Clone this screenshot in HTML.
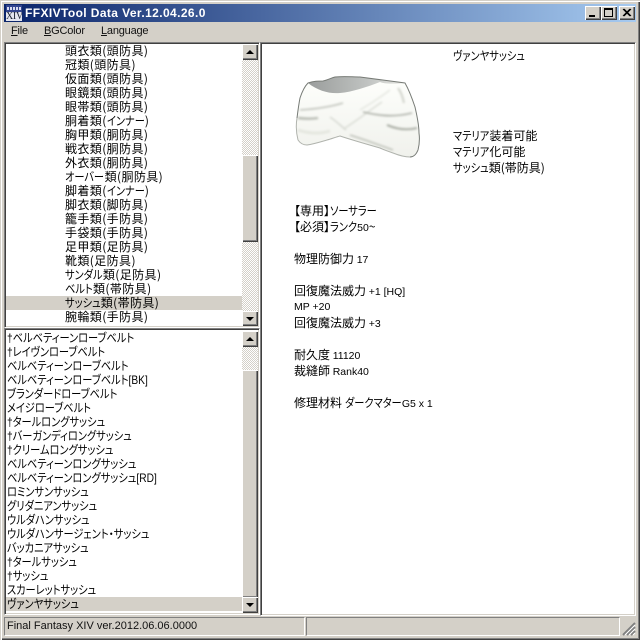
<!DOCTYPE html>
<html><head><meta charset="utf-8"><style>
html,body{margin:0;padding:0;width:640px;height:640px;overflow:hidden;background:#d4d0c8}
*{box-sizing:border-box}
body{position:relative;font:12px/14px "Noto Sans CJK JP","IPAGothic",sans-serif;color:#000;font-feature-settings:"palt"}
.a{position:absolute}
.t{position:absolute;white-space:nowrap;height:14px;line-height:14px}
.l{font-family:"Liberation Sans",sans-serif;font-size:10.5px;letter-spacing:0}
.k{display:inline-block;transform:scaleX(.85);transform-origin:0 0;letter-spacing:0}
.k3{margin-right:-4.7px}.k4{margin-right:-6.3px}.k5{margin-right:-7.9px}.k6{margin-right:-9.5px}
.w{transform:scaleX(.85);transform-origin:0 0}
.d{font-family:"Liberation Sans",sans-serif;font-size:12px}
.btn{position:absolute;background:#d4d0c8;box-shadow:inset 1px 1px 0 #fff,inset -1px -1px 0 #404040,inset -2px -2px 0 #808080}
.track{position:absolute;background:repeating-conic-gradient(#d4d0c8 0 25%,#fff 0 50%) 0 0/2px 2px}
.up{position:absolute;left:4px;top:6px;width:0;height:0;border-left:4px solid transparent;border-right:4px solid transparent;border-bottom:4px solid #000}
.dn{position:absolute;left:4px;top:6px;width:0;height:0;border-left:4px solid transparent;border-right:4px solid transparent;border-top:4px solid #000}
.sel{position:absolute;background:#d4d0c8}
.list1 .t{left:65px;letter-spacing:.4px}
.list2 .t{left:7px;transform:scaleX(.85);transform-origin:0 0}
.list2 .l{font-size:12px}
.menu{font:11px/14px 'Liberation Sans',sans-serif;color:#111;font-feature-settings:normal;letter-spacing:-.2px}
.r{left:294px}
</style></head><body>
<div class="a" style="left:0;top:0;width:640px;height:640px;box-shadow:inset 1px 1px 0 #d4d0c8,inset 2px 2px 0 #fff,inset -1px -1px 0 #404040,inset -2px -2px 0 #808080"></div>
<div class="a" style="left:4px;top:4px;width:632px;height:18px;background:linear-gradient(90deg,#0a246a,#a6caf0)"></div>
<div class="a" style="left:6px;top:5px;width:16px;height:16px;background:#e4e6f0;overflow:hidden">
<div class="a" style="left:0;top:0;width:16px;height:7px;background:#34468f"></div>
<div class="a" style="left:1px;top:2px;width:14px;height:3px;background:repeating-linear-gradient(90deg,#d8dcf0 0 2px,#34468f 2px 3px)"></div>
<div class="a" style="left:0;top:6px;width:16px;height:10px;font:10px/11px 'Liberation Serif',serif;color:#1a2030;text-align:center;letter-spacing:-.3px">XIV</div></div>
<div class="t" style="left:25px;top:6px;color:#fff;font:bold 12px/14px 'Liberation Sans',sans-serif;letter-spacing:.4px;font-feature-settings:normal">FFXIVTool Data Ver.12.04.26.0</div>
<div class="btn" style="left:585px;top:6px;width:16px;height:14px"><div class="a" style="left:4px;top:9px;width:6px;height:2px;background:#000"></div></div>
<div class="btn" style="left:601px;top:6px;width:16px;height:14px"><div class="a" style="left:3px;top:2px;width:9px;height:9px;border:1px solid #000;border-top-width:2px"></div></div>
<div class="btn" style="left:619px;top:6px;width:16px;height:14px"><svg class="a" style="left:3px;top:2px" width="10" height="9"><path d="M1 1L8 8M2 1L9 8M8 1L1 8M9 1L2 8" stroke="#000" stroke-width="1" fill="none"/></svg></div>
<div class="t menu" style="left:11px;top:24px"><u>F</u>ile</div>
<div class="t menu" style="left:44px;top:24px"><u>B</u>GColor</div>
<div class="t menu" style="left:101px;top:24px"><u>L</u>anguage</div>

<div class="a list1" style="left:4px;top:42px;width:256px;height:286px;background:#fff;overflow:hidden">
<div class="sel" style="left:2px;top:254px;width:236px;height:14px"></div>
<div style="position:absolute;left:-4px;top:-42px;width:260px;height:328px">
<div class="t" style="top:44px">頭衣類(頭防具)</div><div class="t" style="top:58px">冠類(頭防具)</div><div class="t" style="top:72px">仮面類(頭防具)</div><div class="t" style="top:86px">眼鏡類(頭防具)</div><div class="t" style="top:100px">眼帯類(頭防具)</div><div class="t" style="top:114px">胴着類(<span class="k k4">インナー</span>)</div><div class="t" style="top:128px">胸甲類(胴防具)</div><div class="t" style="top:142px">戦衣類(胴防具)</div><div class="t" style="top:156px">外衣類(胴防具)</div><div class="t" style="top:170px"><span class="k k4">オーバー</span>類(胴防具)</div><div class="t" style="top:184px">脚着類(<span class="k k4">インナー</span>)</div><div class="t" style="top:198px">脚衣類(脚防具)</div><div class="t" style="top:212px">籠手類(手防具)</div><div class="t" style="top:226px">手袋類(手防具)</div><div class="t" style="top:240px">足甲類(足防具)</div><div class="t" style="top:254px">靴類(足防具)</div><div class="t" style="top:268px"><span class="k k4">サンダル</span>類(足防具)</div><div class="t" style="top:282px"><span class="k k3">ベルト</span>類(帯防具)</div><div class="t" style="top:296px"><span class="k k4">サッシュ</span>類(帯防具)</div><div class="t" style="top:310px">腕輪類(手防具)</div>
</div>
<div class="a" style="left:0;top:0;width:256px;height:286px;border:1px solid;border-color:#808080 #fff #fff #808080;box-shadow:inset 1px 1px 0 #404040,inset -1px -1px 0 #d4d0c8"></div>
</div>
<div class="track" style="left:242px;top:44px;width:16px;height:282px"></div>
<div class="btn" style="left:242px;top:44px;width:16px;height:16px"><div class="up"></div></div>
<div class="btn" style="left:242px;top:155px;width:16px;height:87px"></div>
<div class="btn" style="left:242px;top:311px;width:16px;height:15px"><div class="dn"></div></div>

<div class="a list2" style="left:4px;top:328px;width:256px;height:287px;background:#fff;overflow:hidden">
<div class="sel" style="left:2px;top:269px;width:236px;height:14px"></div>
<div style="position:absolute;left:-4px;top:-328px;width:260px;height:615px">
<div class="t" style="top:331px"><span class="d">†</span>ベルベティーンローブベルト</div><div class="t" style="top:345px"><span class="d">†</span>レイヴンローブベルト</div><div class="t" style="top:359px">ベルベティーンローブベルト</div><div class="t" style="top:373px">ベルベティーンローブベルト<span class="l">[BK]</span></div><div class="t" style="top:387px">ブランダードローブベルト</div><div class="t" style="top:401px">メイジローブベルト</div><div class="t" style="top:415px"><span class="d">†</span>タールロングサッシュ</div><div class="t" style="top:429px"><span class="d">†</span>バーガンディロングサッシュ</div><div class="t" style="top:443px"><span class="d">†</span>クリームロングサッシュ</div><div class="t" style="top:457px">ベルベティーンロングサッシュ</div><div class="t" style="top:471px">ベルベティーンロングサッシュ<span class="l">[RD]</span></div><div class="t" style="top:485px">ロミンサンサッシュ</div><div class="t" style="top:499px">グリダニアンサッシュ</div><div class="t" style="top:513px">ウルダハンサッシュ</div><div class="t" style="top:527px">ウルダハンサージェント・サッシュ</div><div class="t" style="top:541px">バッカニアサッシュ</div><div class="t" style="top:555px"><span class="d">†</span>タールサッシュ</div><div class="t" style="top:569px"><span class="d">†</span>サッシュ</div><div class="t" style="top:583px">スカーレットサッシュ</div><div class="t" style="top:597px">ヴァンヤサッシュ</div>
</div>
<div class="a" style="left:0;top:0;width:256px;height:287px;border:1px solid;border-color:#808080 #fff #fff #808080;box-shadow:inset 1px 1px 0 #404040,inset -1px -1px 0 #d4d0c8"></div>
</div>
<div class="track" style="left:242px;top:331px;width:16px;height:282px"></div>
<div class="btn" style="left:242px;top:331px;width:16px;height:16px"><div class="up"></div></div>
<div class="btn" style="left:242px;top:370px;width:16px;height:228px"></div>
<div class="btn" style="left:242px;top:597px;width:16px;height:16px"><div class="dn"></div></div>

<div class="a" style="left:260px;top:42px;width:376px;height:574px;background:#fff;border:1px solid;border-color:#808080 #fff #fff #808080;box-shadow:inset 1px 1px 0 #404040,inset -1px -1px 0 #d4d0c8"></div>

<svg class="a" style="left:290px;top:70px" width="135" height="95" viewBox="290 70 135 95">
<defs>
<linearGradient id="g" x1="0" y1="0" x2="0" y2="1"><stop offset="0" stop-color="#fefffc"/><stop offset="1" stop-color="#f0f1ec"/></linearGradient>
<linearGradient id="i" x1="0" y1="0" x2="1" y2="0"><stop offset="0" stop-color="#9a9d9c"/><stop offset=".6" stop-color="#bfc2c0"/><stop offset="1" stop-color="#e6e7e3"/></linearGradient>
<filter id="b" x="-10%" y="-10%" width="120%" height="120%"><feGaussianBlur stdDeviation="1"/></filter>
<clipPath id="c"><path d="M298 140C296 132 296 124 297 118C298 110 299 103 300 98C302 92 305 86 308 83C314 81 318 81 323 81C328 80 331 78 335 77C345 76 352 77 360 77C375 79 390 81 405 83C409 90 412 98 415 107C417 116 419 124 419 133C420 140 419 146 418 150C416 155 413 157 410 157C404 157 398 155 393 153C387 151 384 150 380 148C366 144 352 140 340 136C336 137 331 139 327 140C320 142 314 144 307 145C303 145 300 143 298 140Z"/></clipPath>
</defs>
<path d="M298 140C296 132 296 124 297 118C298 110 299 103 300 98C302 92 305 86 308 83C314 81 318 81 323 81C328 80 331 78 335 77C345 76 352 77 360 77C375 79 390 81 405 83C409 90 412 98 415 107C417 116 419 124 419 133C420 140 419 146 418 150C416 155 413 157 410 157C404 157 398 155 393 153C387 151 384 150 380 148C366 144 352 140 340 136C336 137 331 139 327 140C320 142 314 144 307 145C303 145 300 143 298 140Z" fill="url(#g)"/>
<g clip-path="url(#c)"><g filter="url(#b)" fill="none">
<path d="M300 110C315 109 330 107 343 103" stroke="#b4b7af" stroke-width="1.2"/>
<path d="M298 118C306 119 312 119 318 118" stroke="#b8bbb3" stroke-width="2.4"/>
<path d="M330 117C336 121 341 126 346 130" stroke="#c4c7bf" stroke-width="1"/>
<path d="M345 128C358 120 370 110 382 102" stroke="#d4d7cf" stroke-width="1.2"/>
<path d="M363 112C376 115 392 118 412 113" stroke="#a0a49b" stroke-width="1.4"/>
<path d="M387 125C394 128 405 131 417 128" stroke="#a2a69c" stroke-width="1.8"/>
<path d="M350 135C356 137 362 139 368 141C376 144 385 147 393 150" stroke="#b4b8ae" stroke-width="1.4"/>
<path d="M360 110C372 103 382 96 390 90" stroke="#d8dbd3" stroke-width="1"/>
<path d="M398 88C401 92 403 98 404 103" stroke="#d0d3cb" stroke-width="2"/>
<path d="M298 130C310 134 320 134 330 131" stroke="#e4e6df" stroke-width="3"/>
</g></g>
<path d="M308 83C314 81 318 81 323 81C328 80 331 78 335 77C345 76 352 77 360 77C375 79 390 81 405 83C396 84 385 84 380 82C367 87 352 92 340 93C330 94 318 91 308 83Z" fill="url(#i)"/>
<path d="M297 118C298 110 299 103 300 98C302 92 305 86 308 83C314 81 318 81 323 81C328 80 331 78 335 77C345 76 352 77 360 77C375 79 390 81 405 83C409 90 412 98 415 107C417 116 419 124 419 133C420 140 419 146 418 150C416 155 413 157 410 157" fill="none" stroke="#777b76" stroke-width="1"/>
<path d="M298 140C296 132 296 124 297 118M410 157C404 157 398 155 393 153C387 151 384 150 380 148C366 144 352 140 340 136C336 137 331 139 327 140C320 142 314 144 307 145C303 145 300 143 298 140" fill="none" stroke="#b0b3ad" stroke-width="1"/>
</svg>

<div class="t w" style="left:453px;top:49px">ヴァンヤサッシュ</div>
<div class="t" style="left:453px;top:129px"><span class="k k4">マテリア</span>装着可能</div>
<div class="t" style="left:453px;top:145px"><span class="k k4">マテリア</span>化可能</div>
<div class="t" style="left:453px;top:161px"><span class="k k4">サッシュ</span>類(帯防具)</div>
<div class="t r" style="top:204px">【専用】<span class="k k5">ソーサラー</span></div>
<div class="t r" style="top:220px">【必須】<span class="k k3">ランク</span><span class="l">50</span>~</div>
<div class="t r" style="top:252px">物理防御力 <span class="l">17</span></div>
<div class="t r" style="top:284px">回復魔法威力 <span class="l">+1 [HQ]</span></div>
<div class="t l r" style="top:300px">MP +20</div>
<div class="t r" style="top:316px">回復魔法威力 <span class="l">+3</span></div>
<div class="t r" style="top:348px">耐久度 <span class="l">11120</span></div>
<div class="t r" style="top:364px">裁縫師 <span class="l">Rank40</span></div>
<div class="t r" style="top:396px">修理材料 <span class="k k6">ダークマター</span><span class="l">G5 x 1</span></div>

<div class="a" style="left:4px;top:617px;width:301px;height:19px;border:1px solid;border-color:#808080 #fff #fff #808080"></div>
<div class="a" style="left:306px;top:617px;width:314px;height:19px;border:1px solid;border-color:#808080 #fff #fff #808080"></div>
<div class="t" style="left:7px;top:619px;font:11px/14px 'Liberation Sans',sans-serif;color:#111;font-feature-settings:normal">Final Fantasy XIV ver.2012.06.06.0000</div>
<svg class="a" style="left:622px;top:622px" width="14" height="14"><path d="M13 1L1 13M13 5L5 13M13 9L9 13" stroke="#808080" stroke-width="2" fill="none"/><path d="M13 3L3 13M13 7L7 13M13 11L11 13" stroke="#fff" stroke-width="1" fill="none"/></svg>
</body></html>
